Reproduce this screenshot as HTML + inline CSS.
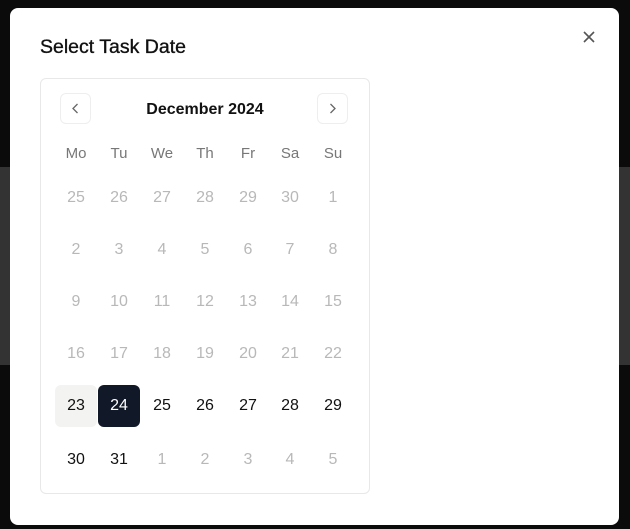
<!DOCTYPE html>
<html><head><style>
body{margin:0;width:630px;height:529px;background:#0b0b0b;position:relative;overflow:hidden;font-family:"Liberation Sans",sans-serif}
.band{position:absolute;left:0;right:0;top:167px;height:198px;background:#333}
.modal{position:absolute;left:10px;top:8px;width:609px;height:517px;background:#fff;border-radius:8px}
h1{position:absolute;left:30px;top:28px;margin:0;font-size:19.5px;font-weight:400;color:#111;-webkit-text-stroke:0.35px #111}
.x{position:absolute;left:572px;top:22px}
.cal{position:absolute;left:30px;top:70px;width:328px;height:414px;border:1px solid #e8e8e8;border-radius:6px}
.nav{position:absolute;top:14px;width:31px;height:31px;border:1px solid #eee;border-radius:6px;box-sizing:border-box}
.month{position:absolute;left:0;width:328px;top:22px;text-align:center;font-size:16px;font-weight:600;color:#111}
.c{position:absolute;width:42px;height:42px;line-height:42px;text-align:center;font-size:16px;margin-left:-21px;margin-top:-21px;border-radius:6px}
.w{color:#777;font-size:15px}.g{color:#b8b8b8}.d{color:#111}
.sel{background:#111827;color:#fff}.hi{background:#f3f3f1}
</style></head><body>
<div class="band"></div>
<div class="modal">
<h1>Select Task Date</h1>
<svg class="x" width="14" height="14" viewBox="0 0 14 14"><path d="M2 2L12 12M12 2L2 12" stroke="#555" stroke-width="1.6"/></svg>
<div class="cal">
<div class="nav" style="left:19px"><svg width="31" height="31" viewBox="0 0 31 31" style="position:absolute;left:-1px;top:-1px"><path d="M17.5 11L13 15.5L17.5 20" fill="none" stroke="#666" stroke-width="1.3"/></svg></div>
<div class="month">December 2024</div>
<div class="nav" style="left:276px"><svg width="31" height="31" viewBox="0 0 31 31" style="position:absolute;left:-1px;top:-1px"><path d="M13.5 11L18 15.5L13.5 20" fill="none" stroke="#666" stroke-width="1.3"/></svg></div>
<div id="g"></div>
</div></div>
<script>
var xs=[35,78,121,164,207,249,292],ys=[75,119,171,223,275,327,381];
var w=["Mo","Tu","We","Th","Fr","Sa","Su"];
var rows=[[25,26,27,28,29,30,1],[2,3,4,5,6,7,8],[9,10,11,12,13,14,15],[16,17,18,19,20,21,22],[23,24,25,26,27,28,29],[30,31,1,2,3,4,5]];
var h="";
w.forEach(function(t,i){h+='<div class="c w" style="left:'+xs[i]+'px;top:'+ys[0]+'px">'+t+'</div>'});
rows.forEach(function(r,ri){r.forEach(function(n,i){var cl="g";if(ri==4||(ri==5&&i<2))cl="d";if(ri==4&&i==0)cl="d hi";if(ri==4&&i==1)cl="sel";if(ri<4)cl="g";h+='<div class="c '+cl+'" style="left:'+xs[i]+'px;top:'+ys[ri+1]+'px">'+n+'</div>'})});
document.getElementById("g").innerHTML=h;
</script>
</body></html>
